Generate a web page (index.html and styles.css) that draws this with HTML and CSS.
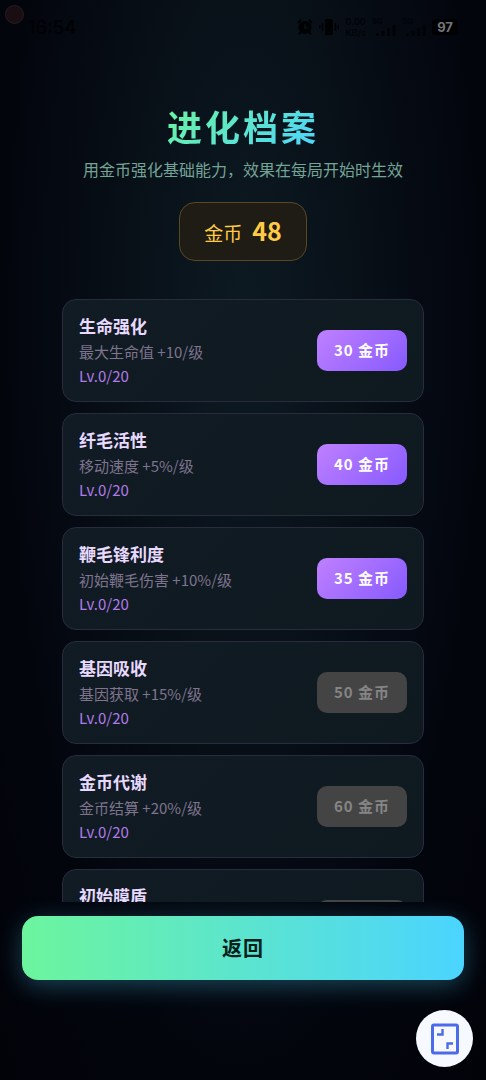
FILE: index.html
```html
<!DOCTYPE html>
<html lang="zh-CN">
<head>
<meta charset="utf-8">
<meta name="viewport" content="width=device-width, initial-scale=1">
<title>进化档案</title>
<link rel="stylesheet" href="styles.css">
</head>
<body>
<div class="app">
  <div class="status">
    <span class="camera"></span>
    <span class="time">16:54</span>
    <div class="status-icons">
      <svg class="alarm" viewBox="0 0 16 16" width="16" height="16"><path d="M1 4 4 1M15 4l-3-3M4 13l-2 2M12 13l2 2" stroke="#000103" stroke-width="2"/><circle cx="8" cy="8.500" r="6.500" fill="#000103"/><path d="M8 5v4h3" fill="none" stroke="#0a1119" stroke-width="1.500"/></svg>
      <svg class="vibrate" viewBox="0 0 20 16" width="20" height="16"><rect x="6" y="0" width="8" height="16" rx="1.500" fill="#000103"/><path d="M3.500 4v8M16.500 4v8M.8 6v4M19.200 6v4" stroke="#000103" stroke-width="1.500"/></svg>
      <span class="rate"><span>0.00</span><span>KB/s</span></span>
      <span class="signal"><span>5G</span><svg viewBox="0 0 20 11" width="20" height="11"><path d="M0 11V8h3v3zM5.500 11V6h3v5zM11 11V3h3v8zM16.500 11V0h3v11z" fill="#010307"/></svg></span>
      <span class="signal"><span>5G</span><svg viewBox="0 0 20 11" width="20" height="11"><path d="M0 11V8h3v3zM5.500 11V6h3v5zM11 11V3h3v8zM16.500 11V0h3v11z" fill="#010307"/></svg></span>
      <span class="battery">97</span>
    </div>
  </div>
  <header class="header">
    <h1 class="title">进化档案</h1>
    <p class="subtitle">用金币强化基础能力，效果在每局开始时生效</p>
    <div class="coins"><span>金币</span><strong>48</strong></div>
  </header>
  <main class="list">
    <section class="card">
      <div class="info"><h2>生命强化</h2><p class="desc">最大生命值 +10/级</p><p class="level">Lv.0/20</p></div>
      <button class="buy" type="button">30 金币</button>
    </section>
    <section class="card">
      <div class="info"><h2>纤毛活性</h2><p class="desc">移动速度 +5%/级</p><p class="level">Lv.0/20</p></div>
      <button class="buy" type="button">40 金币</button>
    </section>
    <section class="card">
      <div class="info"><h2>鞭毛锋利度</h2><p class="desc">初始鞭毛伤害 +10%/级</p><p class="level">Lv.0/20</p></div>
      <button class="buy" type="button">35 金币</button>
    </section>
    <section class="card">
      <div class="info"><h2>基因吸收</h2><p class="desc">基因获取 +15%/级</p><p class="level">Lv.0/20</p></div>
      <button class="buy" type="button" disabled>50 金币</button>
    </section>
    <section class="card">
      <div class="info"><h2>金币代谢</h2><p class="desc">金币结算 +20%/级</p><p class="level">Lv.0/20</p></div>
      <button class="buy" type="button" disabled>60 金币</button>
    </section>
    <section class="card">
      <div class="info"><h2>初始膜盾</h2><p class="desc">&nbsp;</p><p class="level">&nbsp;</p></div>
      <button class="buy" type="button" disabled>&nbsp;</button>
    </section>
  </main>
  <button class="back" type="button">返回</button>
</div>
<button class="float" type="button" aria-label="缩放">
  <svg viewBox="0 0 28 32" width="28" height="32" fill="none" stroke="#4b6bea"><rect x="1.500" y="2" width="25" height="28" rx="1.500" stroke-width="3"/><path d="M6 11.500h5.500V6M22 20.500h-5.500V26" stroke-width="2.400"/></svg>
</button>
</body>
</html>
```
FILE: styles.css
```css
* { box-sizing: border-box; }

body {
  margin: 0;
  background: #03050d;
  color: #fff;
  font-family: "Noto Sans CJK SC", sans-serif;
}

h1, h2, p { margin: 0; }

button {
  border: 0;
  font-family: inherit;
  font-weight: 700;
  letter-spacing: 1px;
}

.app {
  display: flex;
  flex-direction: column;
  height: 100vh;
  padding: 0 22px 100px;
  background: radial-gradient(ellipse at 50% 30%, #0d1a22 0%, #03050d 70%, #020309 100%);
}

.status {
  display: flex;
  align-items: center;
  justify-content: space-between;
  flex: none;
  height: 54px;
  padding: 0 6px;
}

.camera {
  position: absolute;
  top: 5px;
  left: 5px;
  width: 19px;
  height: 19px;
  border: 1px solid #281b20;
  border-radius: 50%;
  background: #1b0e13;
}

.time {
  color: #010206;
  font-family: Inter, sans-serif;
  font-size: 18px;
  font-weight: 600;
}

.status-icons {
  display: flex;
  align-items: center;
  gap: 6px;
  color: #010307;
  font-family: Inter, sans-serif;
}

.rate {
  display: flex;
  flex-direction: column;
  align-items: center;
  font-size: 9px;
  font-weight: 600;
  line-height: 11px;
}

.signal {
  display: flex;
  flex-direction: column;
  font-size: 8px;
  font-weight: 600;
  line-height: 7px;
}

.signal svg { margin-left: 4px; }

.battery {
  width: 26px;
  border-radius: 4px;
  background: #000103;
  color: #737578;
  font-size: 13px;
  font-weight: 700;
  line-height: 16px;
  text-align: center;
}

.header {
  display: flex;
  flex-direction: column;
  align-items: center;
  flex: none;
  padding: 44px 0 38px;
}

.title {
  background: linear-gradient(135deg, #6cf59d, #4bd4ff);
  background-clip: text;
  -webkit-background-clip: text;
  color: transparent;
  font-size: 35px;
  font-weight: 700;
  letter-spacing: 3px;
  line-height: 56px;
}

.subtitle {
  color: #73a496;
  font-size: 16px;
  line-height: 30px;
}

.coins {
  display: flex;
  align-items: baseline;
  gap: 10px;
  margin-top: 18px;
  padding: 9px 24px;
  border: 1px solid #5a4822;
  border-radius: 16px;
  background: #1f1c16;
  color: #ffcb45;
  font-size: 19px;
  line-height: 36px;
}

.coins strong { font-size: 25px; }

.list {
  display: flex;
  flex: 1;
  flex-direction: column;
  gap: 11px;
  min-height: 0;
  margin: 0 40px 14px;
  overflow: hidden;
}

.card {
  display: flex;
  align-items: center;
  justify-content: space-between;
  flex: none;
  padding: 13px 16px;
  border: 1px solid #292c3c;
  border-radius: 14px;
  background: linear-gradient(135deg, #111b23, #0f1920);
}

h2 {
  color: #e8d9ff;
  font-size: 17px;
  line-height: 26px;
}

.desc {
  color: #7e748e;
  font-size: 15px;
  line-height: 25px;
}

.level {
  color: #b17bea;
  font-size: 15px;
  line-height: 24px;
}

.buy {
  height: 41px;
  min-width: 90px;
  padding: 0 16px 2px;
  border-radius: 10px;
  background: linear-gradient(135deg, #bf80ff, #875aff);
  color: #fff;
  font-size: 15px;
}

.buy:disabled {
  background: #444;
  color: #858585;
}

.back {
  flex: none;
  height: 64px;
  padding: 0 0 2px;
  border-radius: 16px;
  background: linear-gradient(90deg, #6cf59d, #4bd4ff);
  box-shadow: 0 6px 24px rgba(75, 212, 255, 0.3);
  color: #03201a;
  font-size: 20px;
}

.float {
  position: fixed;
  right: 13px;
  bottom: 13px;
  display: grid;
  place-items: center;
  width: 57px;
  height: 57px;
  padding: 0;
  border-radius: 50%;
  background: #f6f9ff;
}
```
